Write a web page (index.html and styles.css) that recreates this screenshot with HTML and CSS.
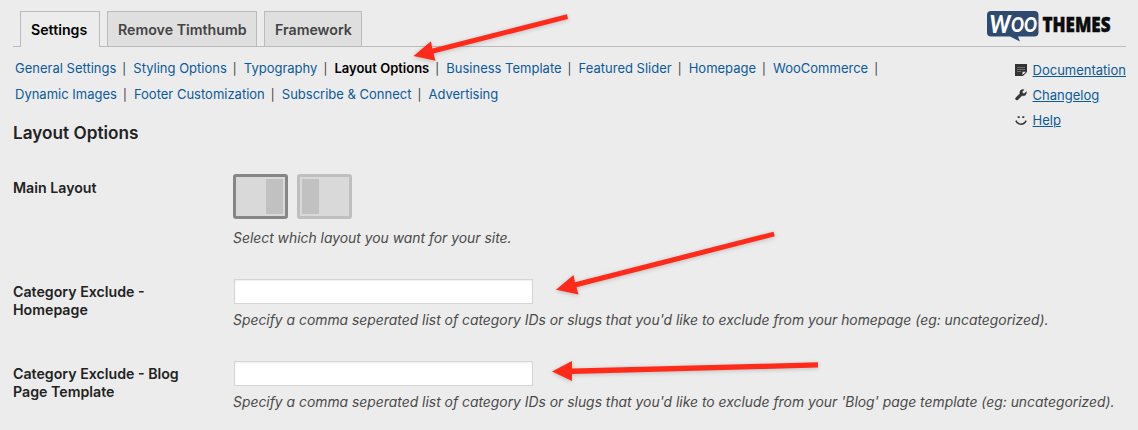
FILE: index.html
```
<!DOCTYPE html>
<html>
<head>
    <meta charset="utf-8">
    <title>Layout Options</title>
    <link rel="stylesheet" href="styles.css">
</head>
<body>
    <div class="wrap">
        <header class="header">
            <nav class="tabs">
                <a class="tab active">Settings</a>
                <a class="tab remove">Remove Timthumb</a>
                <a class="tab framework">Framework</a>
            </nav>
            <svg class="logo" width="150" height="42" viewBox="0 -8 150 42">
                <path d="M5 1h43.500q4 0 4 4v17.500q0 4-4 4H32l2 5-10-5H5q-4 0-4-4V5q0-4 4-4z" fill="#2f4a70"/>
                <text class="logo-woo" x="3.500" y="23" textLength="21" lengthAdjust="spacingAndGlyphs">W</text>
                <text class="logo-oo" x="25" y="22" textLength="26" lengthAdjust="spacingAndGlyphs">OO</text>
                <text class="logo-themes" x="56.500" y="21.500" textLength="68" lengthAdjust="spacingAndGlyphs">THEMES</text>
            </svg>
        </header>

        <div class="top">
            <ul class="subnav">
                <li><a>General Settings</a></li>
                <li><a>Styling Options</a></li>
                <li><a>Typography</a></li>
                <li><a class="current">Layout Options</a></li>
                <li><a>Business Template</a></li>
                <li><a>Featured Slider</a></li>
                <li><a>Homepage</a></li>
                <li><a>WooCommerce</a></li>
                <li><a>Dynamic Images</a></li>
                <li><a>Footer Customization</a></li>
                <li><a>Subscribe &amp; Connect</a></li>
                <li><a>Advertising</a></li>
            </ul>
            <ul class="support">
                <li>
                    <svg width="12" height="12" viewBox="0 0 12 12">
                        <path d="M0 0h12v8l-4 4H0z" fill="#333"/>
                        <path d="M2 3.500h8M2 5.500h8M2 7.500h4" stroke="#888" stroke-width=".7"/>
                        <path d="M7.500 11V7.800H11z" fill="#ececec"/>
                    </svg>
                    <a>Documentation</a>
                </li>
                <li>
                    <svg width="12" height="12" viewBox="0 0 12 12">
                        <path d="M11.300 2.600 9.400 4.500 7.600 4.200 7.300 2.500 9.100.700Q6.800 0 5.500 1.500 4.500 2.700 5 4.500L.800 8.700Q0 9.700.900 10.700 1.900 11.500 2.900 10.700L7 6.600Q9 7.200 10.500 5.900 11.800 4.500 11.300 2.600z" fill="#333" stroke="#333" stroke-width=".4"/>
                    </svg>
                    <a>Changelog</a>
                </li>
                <li>
                    <svg width="12" height="12" viewBox="0 0 12 12">
                        <path d="M2.700 3.200h2M7.300 3.200h2" stroke="#333" stroke-width="1.700"/>
                        <path d="M.900 6.600Q2.500 10.200 6 10.200T11.100 6.600" fill="none" stroke="#333" stroke-width="1.500"/>
                    </svg>
                    <a>Help</a>
                </li>
            </ul>
        </div>

        <h3>Layout Options</h3>

        <div class="row first">
            <label>Main Layout</label>
            <div class="field">
                <div class="layouts">
                    <span class="layout right selected"></span>
                    <span class="layout left"></span>
                </div>
                <p class="desc">Select which layout you want for your site.</p>
            </div>
        </div>
        <div class="row">
            <label>Category Exclude - Homepage</label>
            <div class="field">
                <input type="text">
                <p class="desc">Specify a comma seperated list of category IDs or slugs that you'd like to exclude from your homepage (eg: uncategorized).</p>
            </div>
        </div>
        <div class="row">
            <label>Category Exclude - Blog Page Template</label>
            <div class="field">
                <input type="text">
                <p class="desc">Specify a comma seperated list of category IDs or slugs that you'd like to exclude from your 'Blog' page template (eg: uncategorized).</p>
            </div>
        </div>
    </div>

    <svg class="arrows" width="1138" height="430" viewBox="0 0 1138 430">
        <path d="M413.500 56 431 41.300 432.300 48.500 567 14.300 568 19 433.500 53.500 435.500 60.800z"/>
        <path d="M556 289.700 573.500 275 575 282.200 773.500 231.700 774.800 236.300 576.500 287.300 578.500 294.500z"/>
        <path d="M552 371.500 572 361 572 368.500 818 362.300 818 367.500 572 374 572 381z"/>
    </svg>
</body>
</html>
```
FILE: styles.css
```
body {
    margin: 0;
    background: #ececec;
    color: #222;
    font-family: Inter, "Liberation Sans", sans-serif;
    font-size: 13px;
    height: 430px;
    overflow: hidden;
}

.wrap {
    padding: 11px 12px 0 13px;
}

ul {
    list-style: none;
    margin: 0;
    padding: 0;
}

.header {
    display: flex;
    justify-content: space-between;
    align-items: flex-start;
    height: 35px;
    border-bottom: 1px solid #bbb;
}

.tabs {
    display: flex;
    gap: 7px;
    padding-left: 7px;
}

.tab {
    box-sizing: border-box;
    height: 35px;
    padding: 0 10px;
    border: 1px solid #bbb;
    border-bottom: 0;
    background: #dfdfdf;
    color: #444;
    font-size: 14.2px;
    font-weight: 600;
    line-height: 35px;
    white-space: nowrap;
}

.tab.active {
    width: 80px;
    height: 36px;
    background: #ececec;
    color: #000;
}

.tab.remove {
    width: 150px;
}

.tab.framework {
    width: 98px;
}

.logo {
    margin: -9px -10px 0 0;
}

.logo-woo {
    font: italic 900 25px Lato, sans-serif;
    fill: #fff;
}

.logo-oo {
    font: italic 900 21px Lato, sans-serif;
    fill: #fff;
}

.logo-themes {
    font: 800 21px "Open Sans", sans-serif;
    fill: #0c0c0c;
    stroke: #0c0c0c;
    stroke-width: 0.5px;
}

.top {
    display: flex;
    justify-content: space-between;
    height: 76px;
}

.subnav {
    display: flex;
    flex-wrap: wrap;
    align-content: flex-start;
    width: 880px;
    padding: 9px 0 0 2px;
}

.subnav li {
    height: 26px;
    line-height: 25px;
    white-space: nowrap;
}

.subnav li:not(:last-child)::after {
    content: "|";
    margin: 0 7.2px 0 6px;
    color: #333;
    font-size: 11.5px;
    line-height: 1;
    vertical-align: 0.5px;
}

a {
    color: #0b5a9a;
}

.subnav .current {
    color: #000;
    font-weight: 600;
}

.support {
    padding-top: 11px;
}

.support li {
    display: flex;
    align-items: center;
    gap: 6px;
    height: 25px;
}

.support li svg {
    margin-top: -1px;
}

.support a {
    margin-top: -1px;
    text-decoration: underline;
}

h3 {
    margin: 0;
    font-size: 17.2px;
    font-weight: 600;
    line-height: 20px;
}

.row {
    display: flex;
    height: 82px;
}

.row.first {
    height: 105px;
    padding-top: 31px;
}

label {
    box-sizing: border-box;
    width: 220px;
    padding: 4px 40px 0 0;
    font-size: 14.2px;
    font-weight: 600;
    line-height: 18px;
}

.row.first label {
    padding-top: 5px;
}

.layouts {
    display: flex;
    gap: 9px;
}

.layout {
    box-sizing: border-box;
    width: 55px;
    height: 45px;
    padding: 2px;
    border: 3px solid #bfbfbf;
    border-radius: 3px;
    background: #d9d9d9;
    display: flex;
}

.layout.selected {
    border-color: #868686;
}

.layout::before {
    content: "";
    width: 17px;
    background: #c1c1c1;
}

.layout.right {
    justify-content: flex-end;
}

input {
    display: block;
    box-sizing: border-box;
    width: 299px;
    height: 25px;
    margin: 0 0 0 1px;
    border: 1px solid #d5d5d5;
    background: #fff;
    box-shadow: inset 0 1px 2px rgba(0, 0, 0, 0.07);
}

.desc {
    margin: 7px 0 0;
    color: #4a4a4a;
    font-size: 13.88px;
    font-style: italic;
    line-height: 18px;
    white-space: nowrap;
}

.first .desc {
    margin-top: 10px;
}

.arrows {
    position: absolute;
    top: 0;
    left: 0;
    fill: #ff2a1a;
    filter: drop-shadow(0 1px 2px rgba(0, 0, 0, 0.2));
}
```
